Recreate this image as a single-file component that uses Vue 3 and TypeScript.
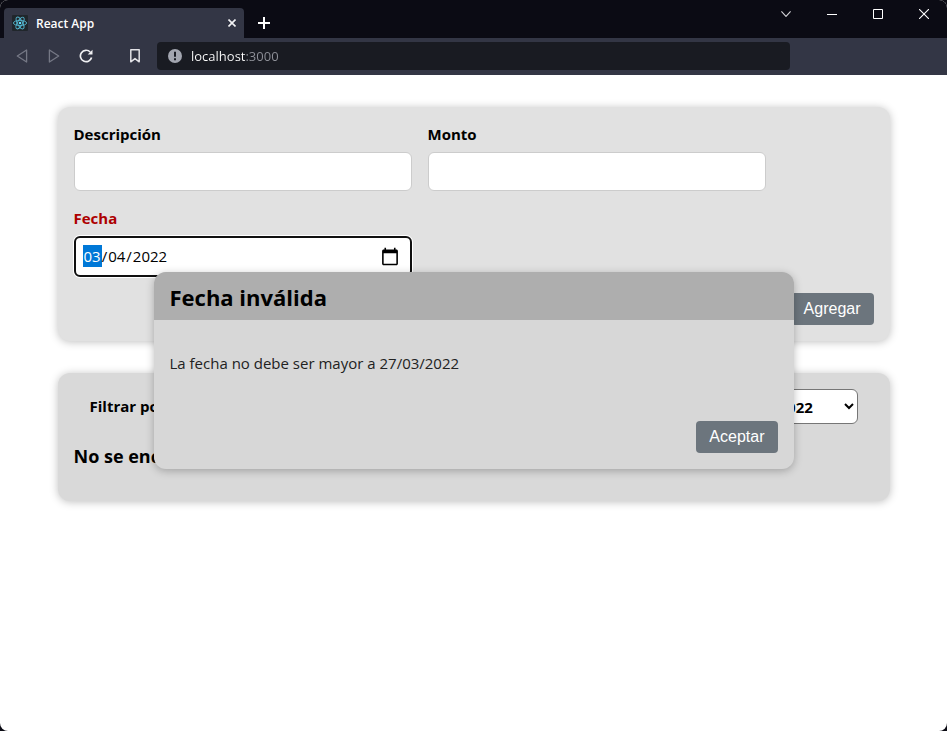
<script setup lang="ts">
import { ref } from 'vue'

const address = ref('localhost:3000')
const description = ref('')
const amount = ref('')
const date = ref('2022-03-04')
const year = ref('2022')
const years: string[] = ['2022', '2021', '2020', '2019']
const modalOpen = ref(true)
</script>

<template>
  <div class="window">
    <header class="tabbar">
      <div class="tab">
        <svg class="favicon" viewBox="0 0 16 16" aria-hidden="true">
          <rect width="16" height="16" rx="1" fill="#20262b" />
          <g fill="none" stroke="#53b5cf" stroke-width="0.9">
            <ellipse cx="8" cy="8" rx="6.6" ry="2.6" />
            <ellipse cx="8" cy="8" rx="6.6" ry="2.6" transform="rotate(60 8 8)" />
            <ellipse cx="8" cy="8" rx="6.6" ry="2.6" transform="rotate(120 8 8)" />
          </g>
          <circle cx="8" cy="8" r="1.3" fill="#61dafb" />
        </svg>
        <span class="tab-title">React App</span>
        <button class="icon-btn tab-close" type="button" aria-label="Cerrar pestaña">
          <svg width="8" height="8" viewBox="0 0 8 8"><path d="M.5.5l7 7M7.500.500l-7 7" stroke="#f2f2f4" stroke-width="1.600" /></svg>
        </button>
      </div>
      <button class="icon-btn new-tab" type="button" aria-label="Nueva pestaña">
        <svg width="12" height="12" viewBox="0 0 12 12"><path d="M6 0v12M0 6h12" stroke="#fff" stroke-width="2" /></svg>
      </button>
      <div class="window-controls">
        <button class="icon-btn" type="button" aria-label="Buscar pestañas">
          <svg width="10" height="10" viewBox="0 0 10 10"><path d="M.4 2.400L5 7.400l4.600-5" fill="none" stroke="#d4d4d8" stroke-width="1.100" /></svg>
        </button>
        <button class="icon-btn" type="button" aria-label="Minimizar">
          <svg width="10" height="10" viewBox="0 0 10 10"><path d="M0 5.500h10" stroke="#fff" /></svg>
        </button>
        <button class="icon-btn" type="button" aria-label="Maximizar">
          <svg width="10" height="10" viewBox="0 0 10 10"><path d="M.5.500h9v9h-9z" fill="none" stroke="#fff" /></svg>
        </button>
        <button class="icon-btn" type="button" aria-label="Cerrar">
          <svg width="10" height="10" viewBox="0 0 10 10"><path d="M0 0l10 10M10 0L0 10" stroke="#fff" stroke-width="1.100" /></svg>
        </button>
      </div>
    </header>

    <nav class="toolbar">
      <div class="nav-buttons">
        <button class="icon-btn" type="button" aria-label="Atrás">
          <svg width="12" height="14" viewBox="0 0 12 14"><path d="M10.600 1v12L1.300 7z" fill="none" stroke="#757885" stroke-width="1.300" stroke-linejoin="round" /></svg>
        </button>
        <button class="icon-btn" type="button" aria-label="Adelante">
          <svg width="12" height="14" viewBox="0 0 12 14"><path d="M1.400 1v12L10.700 7z" fill="none" stroke="#757885" stroke-width="1.300" stroke-linejoin="round" /></svg>
        </button>
        <button class="icon-btn" type="button" aria-label="Recargar">
          <svg width="14" height="14" viewBox="0 0 14 14">
            <path d="M11.200 3A5.700 5.700 0 1 0 12.600 8.500" fill="none" stroke="#f0f0f2" stroke-width="1.700" />
            <path d="M13.500.800v4.800H8.700z" fill="#f0f0f2" />
          </svg>
        </button>
      </div>
      <button class="icon-btn bookmark" type="button" aria-label="Marcador">
        <svg width="10" height="14" viewBox="0 0 10 14"><path d="M.8.800h8.400v12L5 9.600.8 12.800z" fill="none" stroke="#e2e2e6" stroke-width="1.500" stroke-linejoin="round" /></svg>
      </button>
      <label class="address">
        <svg width="14" height="14" viewBox="0 0 14 14" role="img" aria-label="Información del sitio">
          <circle cx="7" cy="7" r="7" fill="#a3a6b0" />
          <path d="M7 2.800v5" stroke="#1a1c24" stroke-width="2" />
          <path d="M7 9.300v2" stroke="#1a1c24" stroke-width="2" />
        </svg>
        <input v-model="address" class="address-input" type="text" aria-label="Dirección" />
      </label>
    </nav>

    <main class="page">
      <form class="card form-card" @submit.prevent>
        <div class="fields">
          <div class="field">
            <label for="description">Descripción</label>
            <input id="description" v-model="description" type="text" />
          </div>
          <div class="field">
            <label for="amount">Monto</label>
            <input id="amount" v-model="amount" type="text" />
          </div>
          <div class="field invalid">
            <label for="date">Fecha</label>
            <input id="date" v-model="date" type="date" />
          </div>
        </div>
        <div class="actions">
          <button class="btn" type="submit">Agregar</button>
        </div>
      </form>

      <section class="card list-card">
        <div class="filter">
          <label for="year">Filtrar por año</label>
          <select id="year" v-model="year">
            <option v-for="y in years" :key="y" :value="y">{{ y }}</option>
          </select>
        </div>
        <h3 class="empty">No se encontraron gastos</h3>
      </section>

      <div v-if="modalOpen" class="modal" role="dialog" aria-labelledby="modal-title">
        <h2 id="modal-title" class="modal-title">Fecha inválida</h2>
        <p class="modal-text">La fecha no debe ser mayor a 27/03/2022</p>
        <div class="modal-actions">
          <button class="btn" type="button" @click="modalOpen = false">Aceptar</button>
        </div>
      </div>
    </main>
  </div>
</template>

<style>
body {
  margin: 0;
  background: #0b0b14;
}
</style>

<style scoped>
.window {
  box-sizing: border-box;
  min-height: 100vh;
  display: flex;
  flex-direction: column;
  overflow: hidden;
  border-radius: 8px;
  background: #fff;
  color: #000;
  font-family: "Open Sans", "Noto Sans", sans-serif;
  font-size: 15px;
  line-height: 23px;
}

.icon-btn {
  display: flex;
  align-items: center;
  justify-content: center;
  padding: 0;
  border: 0;
  background: none;
}

.tabbar {
  display: flex;
  height: 38px;
  background: #0b0b14;
}

.tab {
  box-sizing: border-box;
  display: flex;
  align-items: center;
  gap: 8px;
  width: 240px;
  margin: 8px 0 0 4px;
  padding: 0 8px;
  border-radius: 4px 4px 0 0;
  background: #333645;
}

.favicon {
  width: 16px;
  height: 16px;
}

.tab-title {
  flex: 1;
  color: #fff;
  font-size: 12px;
  font-weight: 600;
}

.tab-close {
  width: 8px;
  height: 16px;
}

.new-tab {
  width: 40px;
  padding-top: 8px;
}

.window-controls {
  display: flex;
  height: 28px;
  margin-left: auto;
}

.window-controls .icon-btn {
  width: 46px;
}

.toolbar {
  box-sizing: border-box;
  display: flex;
  align-items: center;
  height: 37px;
  padding: 0 157px 1px 0;
  background: #333645;
}

.nav-buttons {
  display: flex;
  padding-left: 6px;
}

.nav-buttons .icon-btn {
  width: 32px;
  height: 28px;
}

.bookmark {
  width: 32px;
  height: 28px;
  margin: 0 6px 0 17px;
}

.address {
  box-sizing: border-box;
  display: flex;
  flex: 1;
  align-items: center;
  gap: 9px;
  height: 28px;
  padding: 0 11px;
  border-radius: 4px;
  background: #191b22;
}

.address-input {
  flex: 1;
  min-width: 0;
  padding: 0;
  border: 0;
  outline: 0;
  background: linear-gradient(90deg, #fff 55px, #8f9199 55px);
  background-clip: text;
  -webkit-background-clip: text;
  color: transparent;
  font: 13px/20px "Open Sans", "Noto Sans", sans-serif;
}

.page {
  position: relative;
  flex: 1;
  padding: 32px 16px;
}

.card {
  box-sizing: border-box;
  max-width: 832px;
  margin: 0 auto 32px;
  padding: 16px;
  border-radius: 12px;
  background: #e1e1e1;
  box-shadow: 0 1px 8px rgba(0, 0, 0, 0.25);
}

.list-card {
  background: #d9d9d9;
}

.fields {
  display: flex;
  flex-wrap: wrap;
  gap: 16px;
}

.field {
  display: flex;
  flex-direction: column;
  gap: 6px;
  width: 338px;
}

.field label,
.filter label {
  font-weight: 700;
}

.field input {
  box-sizing: border-box;
  height: 39px;
  padding: 8px;
  border: 1px solid #ccc;
  border-radius: 6px;
  outline: 0;
  background: #fff;
  color: #000;
  font: inherit;
}

.field.invalid label {
  color: #ad0000;
}

.field.invalid input {
  height: 41px;
  padding: 7px;
  border: 2px solid #101010;
  box-shadow: 0 0 0 1px #fff;
}

.field input::-webkit-datetime-edit-month-field {
  background: #0078d7;
  color: #fff;
}

.field input::-webkit-calendar-picker-indicator {
  width: 20px;
  height: 20px;
  margin-right: 1px;
}

.actions {
  display: flex;
  justify-content: flex-end;
  margin-top: 16px;
}

.btn {
  height: 32px;
  padding: 0 13px;
  border: 0;
  border-radius: 4px;
  background: #6c757d;
  color: #fff;
  font: 16px/32px "Liberation Sans", Arial, sans-serif;
}

.filter {
  display: flex;
  align-items: center;
  justify-content: space-between;
  padding: 0 16px;
}

.filter select {
  width: 96px;
  height: 35px;
  padding: 0 1px 0 12px;
  border: 1px solid #767676;
  border-radius: 6px;
  background-color: #fff;
  color: #000;
  font: inherit;
  font-weight: 700;
}

.empty {
  margin: 20px 0 17px;
  font-size: 18px;
  line-height: 24px;
}

.modal {
  position: absolute;
  top: 30%;
  left: 0;
  right: 0;
  max-width: 640px;
  margin: 0 auto;
  overflow: hidden;
  border-radius: 12px;
  background: #d7d7d7;
  box-shadow: 0 2px 8px rgba(0, 0, 0, 0.26);
}

.modal-title {
  margin: 0;
  padding: 9px 16px 7px;
  background: #aeaeae;
  font-size: 22px;
  line-height: 32px;
}

.modal-text {
  margin: 0;
  padding: 32px 16px 30px;
  color: #222;
}

.modal-actions {
  display: flex;
  justify-content: flex-end;
  padding: 16px;
}
</style>
